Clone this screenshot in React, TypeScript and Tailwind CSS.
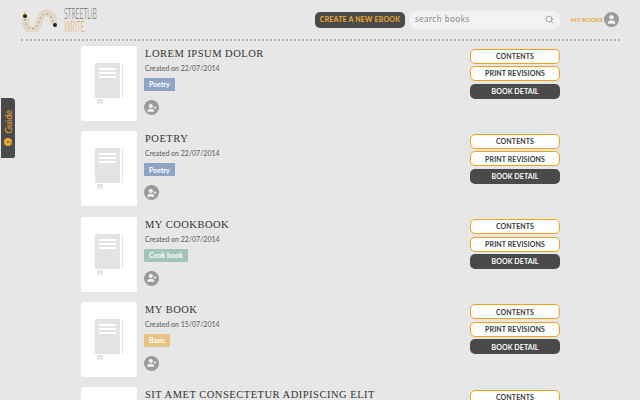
import { Search, User, UserPlus } from "lucide-react";

const books = [
  { title: "LOREM IPSUM DOLOR", date: "22/07/2014", tag: "Poetry", color: "bg-[#8ea4c4]" },
  { title: "POETRY", date: "22/07/2014", tag: "Poetry", color: "bg-[#8ea4c4]" },
  { title: "MY COOKBOOK", date: "22/07/2014", tag: "Cook book", color: "bg-[#a3c4b8]" },
  { title: "MY BOOK", date: "15/07/2014", tag: "Basic", color: "bg-[#e8c384]" },
  { title: "SIT AMET CONSECTETUR ADIPISCING ELIT", date: "15/07/2014", tag: "Basic", color: "bg-[#e8c384]" },
];

const Logo = () => {
  return (
    <div className="flex items-center ml-[22px]">
      <svg width="35" height="24" viewBox="0 0 35 24">
        <path d="M3 10 C3 26 14 25 17 15 C19 7 21 4 26 5 C30 6 31 10 32 14" fill="none" stroke="#e0d9c3" strokeWidth="7" strokeLinecap="round" />
        <path d="M3 11 C4 24 14 23 17 14 C19 7 21 5 26 6 C29 7 30 11 31 14" fill="none" stroke="#6b6757" strokeWidth="0.7" strokeDasharray="1.5 3" />
        <circle cx="3" cy="8" r="2" fill="#222" />
        <path d="M2 6.5 L3 3 L4 6.5 Z" fill="#e8a020" />
        <circle cx="33" cy="17" r="2" fill="#222" />
      </svg>
      <div className="flex flex-col w-[34px] ml-[7px] font-['Lato',sans-serif] font-light text-[15px] leading-[12.5px] origin-left scale-x-[0.45]">
        <span className="text-[#6a6863] whitespace-nowrap">STREETLIB</span>
        <span className="text-[#e8a93c] whitespace-nowrap">WRITE</span>
      </div>
    </div>
  );
};

const Header = () => {
  return (
    <header className="flex items-center h-[39px]">
      <Logo />
      <div className="flex items-center ml-auto mr-[21px]">
        <button className="w-[90px] h-[16px] rounded-[5px] bg-[#4a4a4a] text-[#f0a92e] text-[7px] font-bold tracking-[0.2px] flex items-center justify-center whitespace-nowrap">
          CREATE A NEW EBOOK
        </button>
        <div className="flex items-center justify-between w-[150px] h-[18px] ml-[5px] rounded-[6px] bg-[#f2f2f2] pl-[5px] pr-[6px]">
          <span className="text-[8.5px] tracking-[0.5px] text-[#8a8a8a]">search books</span>
          <Search size={9} className="text-[#8a8a8a]" />
        </div>
        <span className="w-[31px] ml-[11px] text-[6px] font-bold text-[#e8a93c] whitespace-nowrap">MY BOOKS</span>
        <div className="flex items-center justify-center w-[15px] h-[15px] ml-[2px] rounded-full bg-[#9a9a9a]">
          <User size={11} fill="#f2f2f2" className="text-[#f2f2f2]" />
        </div>
      </div>
    </header>
  );
};

const BookCover = () => {
  return (
    <div className="relative w-[56px] h-[75px] rounded-[2px] bg-white pt-[17px] pl-[14px] shrink-0">
      <div className="flex items-start gap-[2px]">
        <div className="flex flex-col gap-[2px] w-[25px] h-[35px] bg-[#e4e4e4] px-[4px] pt-[5px]">
          <div className="h-[2px] bg-white" />
          <div className="h-[2px] bg-white" />
          <div className="h-[2px] bg-white" />
        </div>
        <div className="w-[1px] h-[35px] bg-[#e4e4e4]" />
      </div>
      <svg className="absolute left-[16px] top-[53px]" width="6" height="6" viewBox="0 0 6 6">
        <path d="M0 0 H6 V6 L3 4 L0 6 Z" fill="#e4e4e4" />
      </svg>
    </div>
  );
};

const BookActions = () => {
  return (
    <div className="flex flex-col gap-[2.5px] w-[90px] ml-auto mr-[80px] pt-[2.5px] text-[7px] font-bold tracking-[0.1px]">
      <button className="h-[15px] rounded-[5px] bg-white border-[1.5px] border-[#f0a21e] text-[#3a3a3a] flex items-center justify-center">
        CONTENTS
      </button>
      <button className="h-[15px] rounded-[5px] bg-white border-[1.5px] border-[#f0a21e] text-[#3a3a3a] flex items-center justify-center">
        PRINT REVISIONS
      </button>
      <button className="h-[15px] rounded-[5px] bg-[#4a4a4a] text-white flex items-center justify-center">
        BOOK DETAIL
      </button>
    </div>
  );
};

const BookRow = ({ book }: { book: (typeof books)[number] }) => {
  return (
    <div className="flex h-[85.33px] shrink-0 pl-[81px]">
      <BookCover />
      <div className="flex flex-col items-start ml-[7px] whitespace-nowrap">
        <p className="mt-[1px] pl-[1px] font-['Liberation_Serif',serif] text-[10.5px] leading-[14px] tracking-[0.5px] text-[#333333]">{book.title}</p>
        <p className="mt-[2px] pl-[1px] text-[7px] leading-[10px] text-[#5a5a5a]">Created on {book.date}</p>
        <span className={`mt-[5px] flex items-center h-[13px] px-[5px] text-[7px] font-bold text-white ${book.color}`}>
          {book.tag}
        </span>
        <div className="flex items-center justify-center w-[15px] h-[15px] mt-[9px] rounded-full bg-[#9a9a9a]">
          <UserPlus size={10} fill="#f2f2f2" className="text-[#f2f2f2]" />
        </div>
      </div>
      <BookActions />
    </div>
  );
};

const App = () => {
  return (
    <div className="relative h-[400px] w-[640px] overflow-hidden bg-[#e7e7e7] font-['Lato',sans-serif]">
      <Header />
      <div className="ml-[21px] mr-[20px] border-t-2 border-dotted border-[#b4b4b4]" />
      <main className="flex flex-col pt-[5px]">
        {books.map((book) => (
          <BookRow book={book} key={book.title} />
        ))}
      </main>
      <div className="absolute left-[1px] top-[98px] flex flex-col items-center justify-end gap-[5px] w-[14px] h-[60px] rounded-tr-[4px] rounded-br-[2px] bg-[#4a4a4a] pb-[12px]">
        <span className="[writing-mode:vertical-rl] rotate-180 text-[9px] leading-none text-[#eba92f]">Guide</span>
        <span className="flex items-center justify-center w-[8px] h-[8px] rounded-full bg-[#f0a92e] text-[6px] font-bold text-[#4a4a4a] -rotate-90">?</span>
      </div>
    </div>
  );
};

export default App;
